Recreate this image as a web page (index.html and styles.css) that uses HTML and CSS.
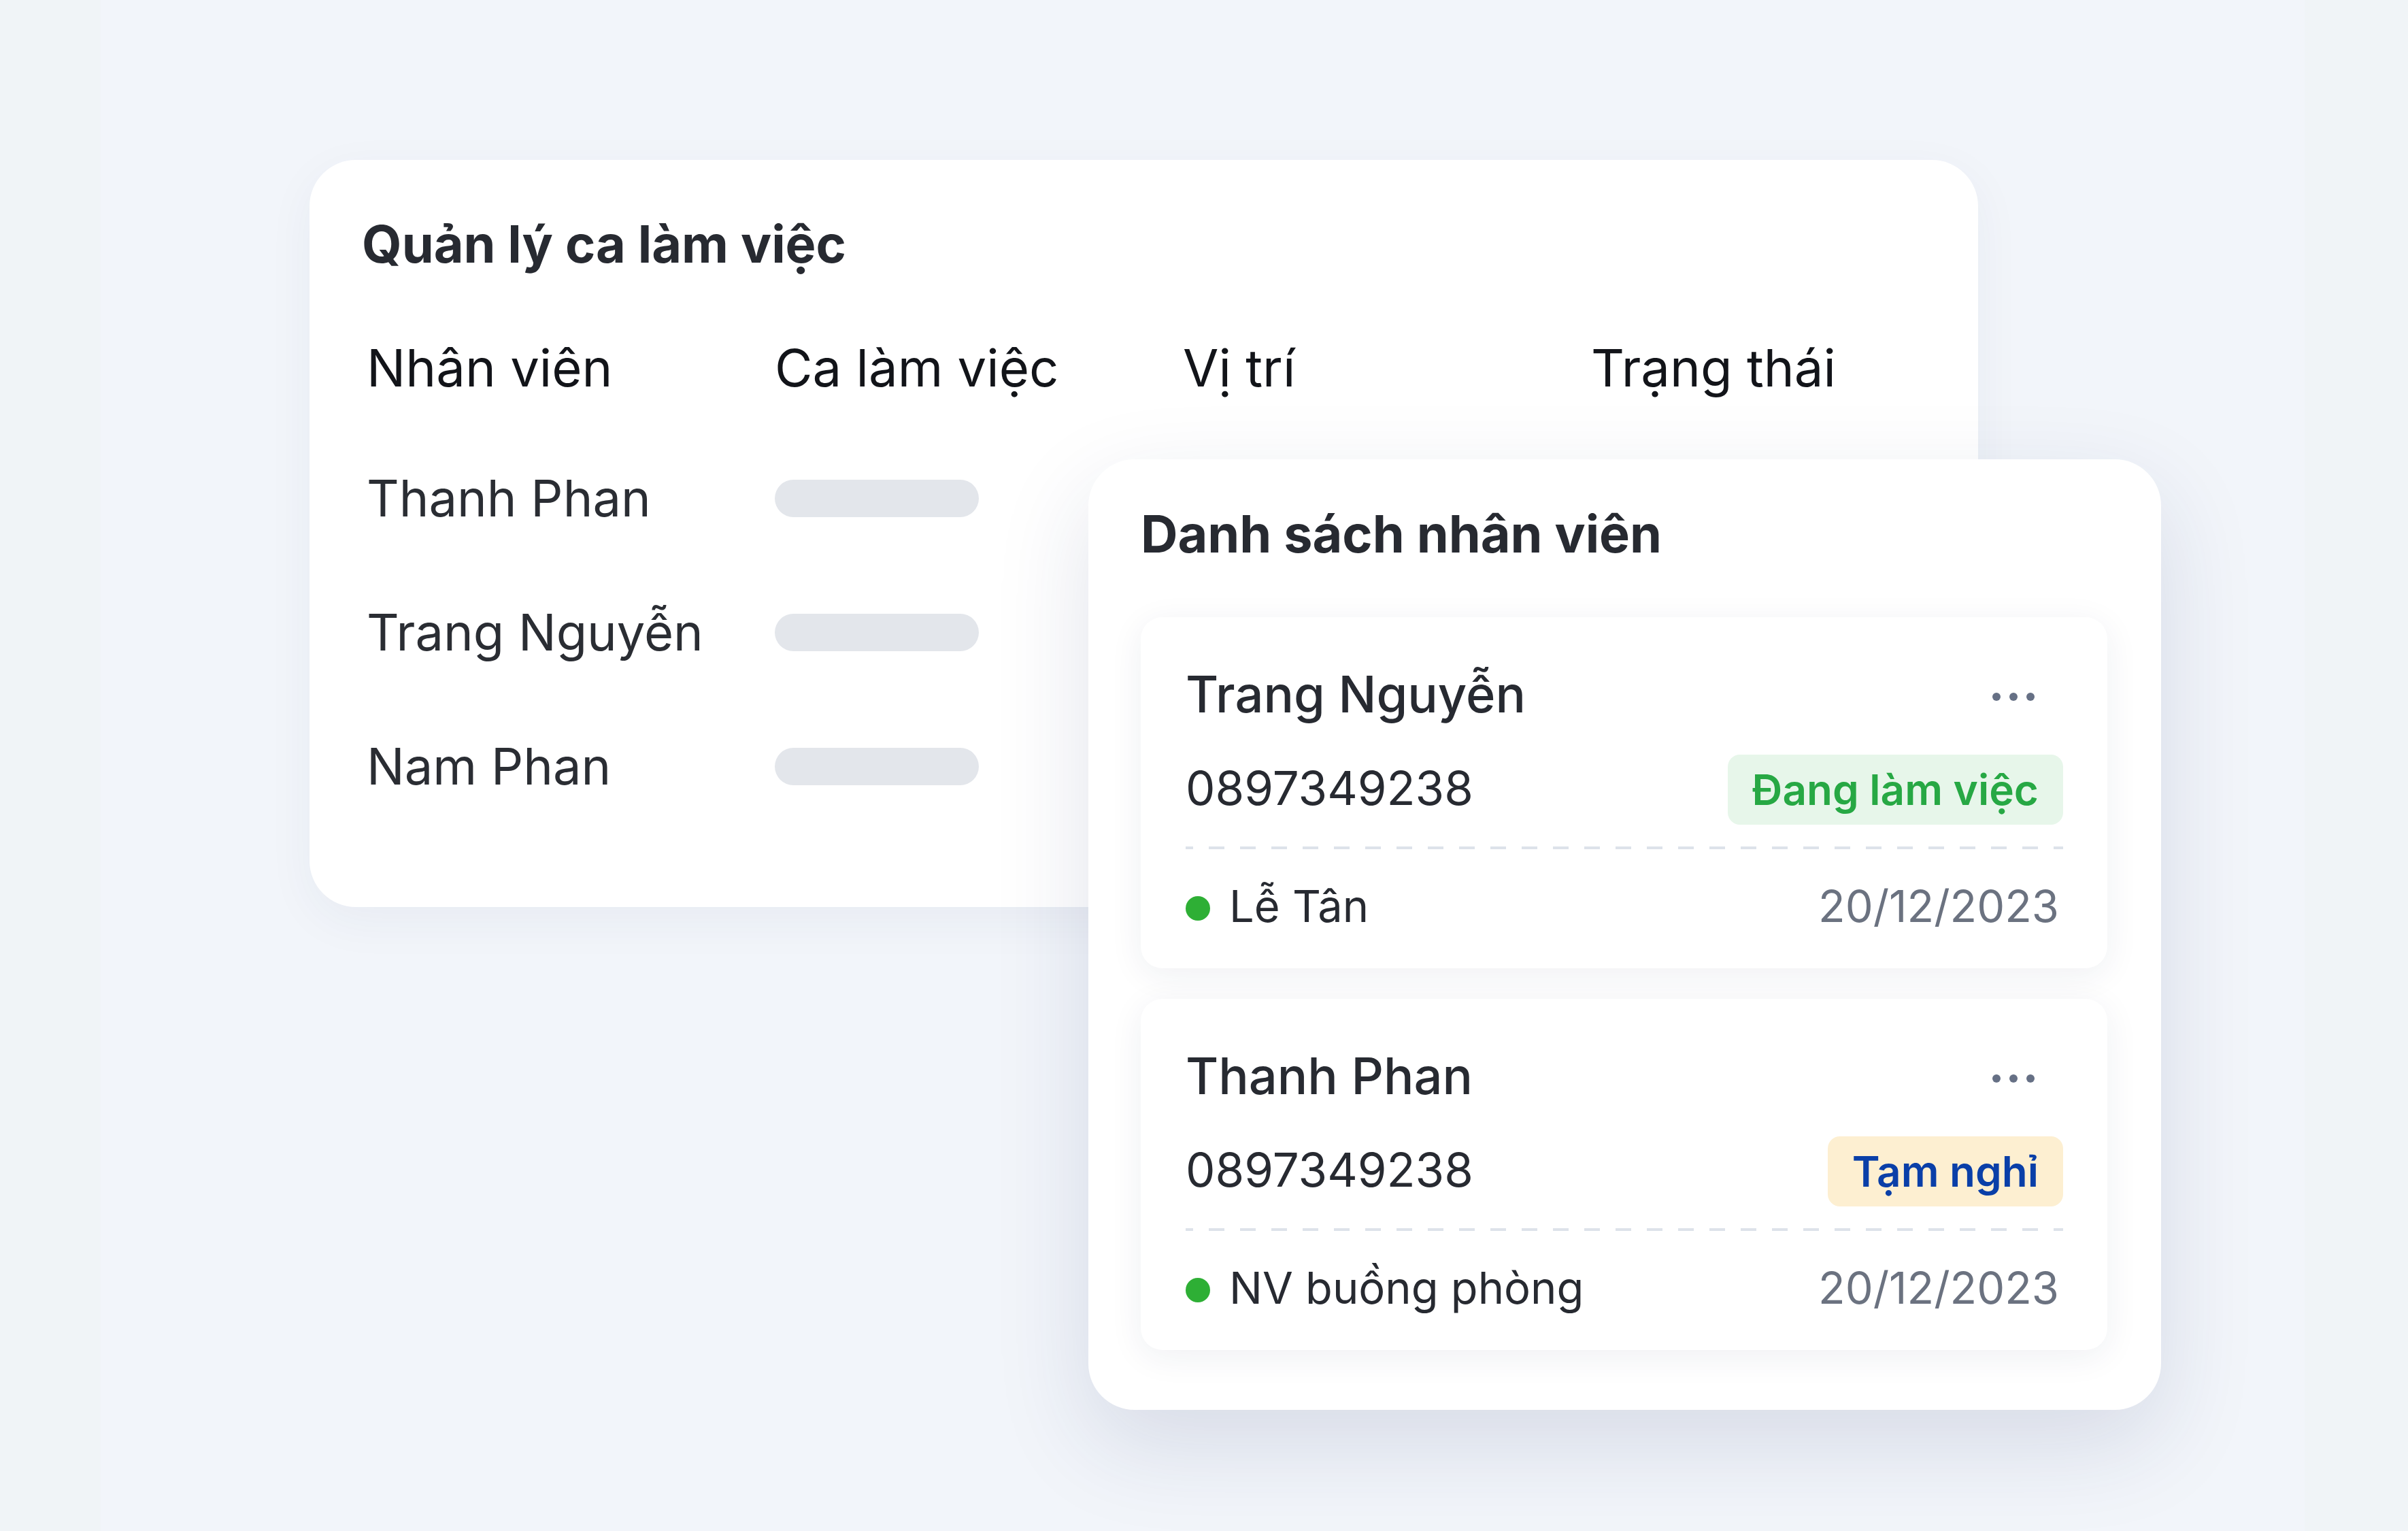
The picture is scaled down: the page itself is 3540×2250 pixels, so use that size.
FILE: index.html
```html
<!DOCTYPE html>
<html lang="vi">
<head>
<meta charset="utf-8">
<title>Quản lý ca làm việc</title>
<link rel="stylesheet" href="styles.css">
</head>
<body>
<main class="stage">
  <section class="card shifts">
    <h2 class="card-title">Quản lý ca làm việc</h2>
    <div class="table">
      <div class="tr th">
        <div>Nhân viên</div>
        <div>Ca làm việc</div>
        <div>Vị trí</div>
        <div>Trạng thái</div>
      </div>
      <div class="tr">
        <div>Thanh Phan</div>
        <div><span class="skeleton"></span></div>
        <div></div>
        <div></div>
      </div>
      <div class="tr">
        <div>Trang Nguyễn</div>
        <div><span class="skeleton"></span></div>
        <div></div>
        <div></div>
      </div>
      <div class="tr">
        <div>Nam Phan</div>
        <div><span class="skeleton"></span></div>
        <div></div>
        <div></div>
      </div>
    </div>
  </section>

  <section class="card staff">
    <h2 class="card-title">Danh sách nhân viên</h2>
    <div class="staff-list">
      <article class="person">
        <div class="row">
          <div class="name">Trang Nguyễn</div>
          <svg class="more" width="62" height="12" viewBox="0 0 62 12"><circle cx="6" cy="6" r="6"/><circle cx="31" cy="6" r="6"/><circle cx="56" cy="6" r="6"/></svg>
        </div>
        <div class="row base">
          <div class="phone">0897349238</div>
          <span class="badge working">Đang làm việc</span>
        </div>
        <div class="dash"></div>
        <div class="row foot">
          <div class="role"><span class="dot"></span>Lễ Tân</div>
          <div class="date">20/12/2023</div>
        </div>
      </article>
      <article class="person">
        <div class="row">
          <div class="name">Thanh Phan</div>
          <svg class="more" width="62" height="12" viewBox="0 0 62 12"><circle cx="6" cy="6" r="6"/><circle cx="31" cy="6" r="6"/><circle cx="56" cy="6" r="6"/></svg>
        </div>
        <div class="row base">
          <div class="phone">0897349238</div>
          <span class="badge paused">Tạm nghỉ</span>
        </div>
        <div class="dash"></div>
        <div class="row foot">
          <div class="role"><span class="dot"></span>NV buồng phòng</div>
          <div class="date">20/12/2023</div>
        </div>
      </article>
    </div>
  </section>
</main>
</body>
</html>
```

FILE: styles.css
```css
* { box-sizing: border-box; }

html, body {
  margin: 0;
  padding: 0;
}

body {
  background: #f0f4f7;
  font-family: Inter, "Noto Sans", "Liberation Sans", sans-serif;
  color: #272a31;
  width: 3540px;
  height: 2250px;
  overflow: hidden;
}

.stage {
  position: relative;
  margin: 0 152px 0 148px;
  height: 2250px;
  background: #f2f5fa;
  padding: 235px 0 0 307px;
}

.card {
  background: #ffffff;
  border-radius: 68px;
}

.card-title {
  margin: 0;
  font-size: 75.5px;
  line-height: 93px;
  font-weight: 700;
  color: #272a31;
}

/* ---------- Shift management card ---------- */
.shifts {
  width: 2453px;
  padding: 77px 78px 161px 77px;
  box-shadow: 0 20px 70px rgba(40, 60, 100, 0.05);
}

.table {
  margin: 89px 0 0 7px;
  display: flex;
  flex-direction: column;
  gap: 105px;
}

.tr {
  display: grid;
  grid-template-columns: 600px 600px 600px 1fr;
  font-size: 74px;
  line-height: 92px;
  color: #2a2d33;
  align-items: center;
}

.tr.th {
  font-size: 76px;
  color: #121419;
  margin-bottom: -5px;
}

.skeleton {
  display: block;
  width: 300px;
  height: 55px;
  border-radius: 28px;
  background: #e3e6eb;
}

/* ---------- Staff list card ---------- */
.staff {
  position: absolute;
  left: 1452px;
  top: 675px;
  width: 1577px;
  padding: 63px 79px 88px 77px;
  box-shadow: 0 50px 140px rgba(30, 50, 100, 0.13);
}

.staff-list {
  margin-top: 76px;
  display: flex;
  flex-direction: column;
  gap: 45px;
}

.person {
  background: #ffffff;
  border-radius: 32px;
  padding: 67px 65px 51px 66px;
  box-shadow: 0 10px 50px rgba(25, 40, 80, 0.07);
}

.row {
  display: flex;
  justify-content: space-between;
  align-items: center;
}

.row.base {
  margin-top: 43px;
  align-items: baseline;
}

.name {
  font-size: 74px;
  line-height: 92px;
  font-weight: 500;
  color: #272a31;
}

.more {
  fill: #667085;
  margin-right: 42px;
  margin-top: 8px;
}

.phone {
  font-size: 69px;
  line-height: 85px;
  color: #272a31;
}

.badge {
  display: inline-block;
  font-size: 62px;
  line-height: 75px;
  font-weight: 600;
  padding: 14px 36px;
  border-radius: 18px;
}

.badge.working {
  background: #e7f6ea;
  color: #27a844;
}

.badge.paused {
  background: #fdefd1;
  color: #0a3fa8;
}

.dash {
  margin-top: 32px;
  height: 4px;
  background-image: repeating-linear-gradient(to right, #dde2ea 0 23px, transparent 23px 46px);
  background-position: -12px 0;
}

.row.foot {
  margin-top: 43px;
  font-size: 65px;
  line-height: 81px;
}

.role {
  display: flex;
  align-items: center;
  gap: 28px;
  color: #272a31;
}

.dot {
  width: 36px;
  height: 36px;
  border-radius: 50%;
  background: #2eaf35;
  margin-top: 6px;
}

.date {
  color: #6b7280;
  margin-right: 6px;
}
```
